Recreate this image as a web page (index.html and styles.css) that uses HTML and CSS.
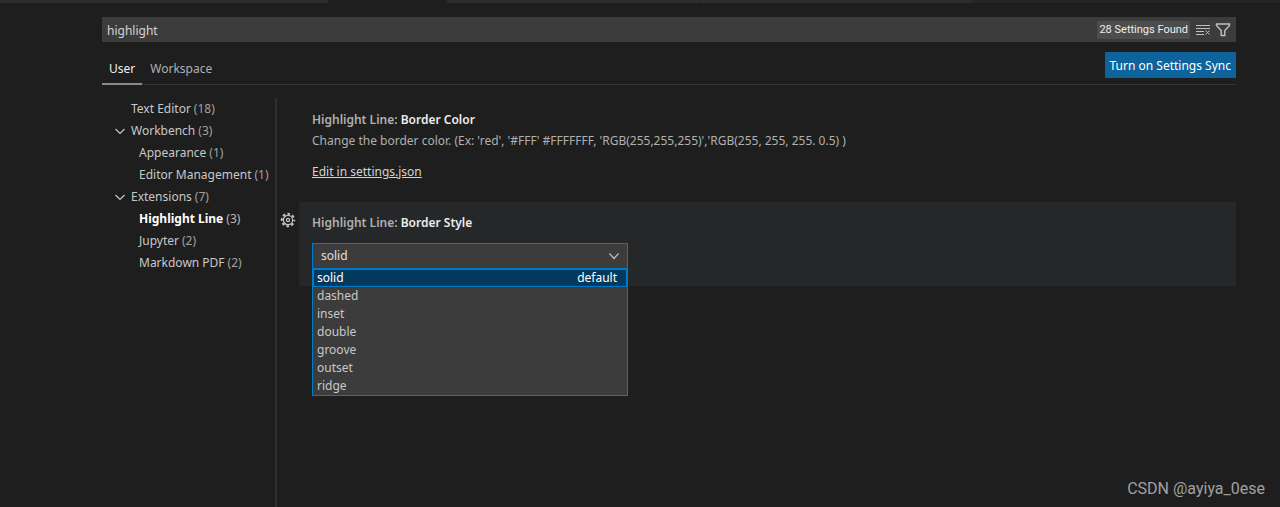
FILE: index.html
```html
<!DOCTYPE html>
<html lang="en">
<head>
<meta charset="utf-8">
<title>Settings</title>
<link rel="stylesheet" href="styles.css">
</head>
<body>
<div class="tabstrip">
  <span class="file w24"></span><span class="file w187"></span><span class="file w118"></span><span class="file active w118"></span><span class="file w124"></span><span class="file w130"></span><span class="file w154"></span><span class="file w118"></span>
</div>
<main class="settings">
  <div class="search">
    <input class="query" type="text" value="highlight" aria-label="Search settings">
    <span class="count-badge">28 Settings Found</span>
    <button class="icon-btn" aria-label="Clear search"><svg width="16" height="16" viewBox="0 0 16 16" fill="none" stroke="currentColor"><path d="M1 3.500h14M1 6.500h14M1 9.500h8M1 12.500h8M10.500 8.500l4 4M14.500 8.500l-4 4"/></svg></button>
    <button class="icon-btn" aria-label="Filter settings"><svg width="16" height="16" viewBox="0 0 16 16" fill="none" stroke="currentColor" stroke-width="1.400"><path d="M1.500 2h13v1.500L9.800 8.500v5H6.200v-5L1.500 3.500z"/></svg></button>
  </div>
  <div class="scope">
    <nav class="scope-tabs">
      <button class="scope-tab selected">User</button>
      <button class="scope-tab">Workspace</button>
    </nav>
    <button class="sync">Turn on Settings Sync</button>
  </div>
  <div class="body">
    <nav class="toc">
      <a class="row" href="#">Text Editor <span class="num">(18)</span></a>
      <a class="row" href="#"><svg class="chev" width="16" height="16" viewBox="0 0 16 16"><path d="M3.500 6L8 10.500 12.500 6"/></svg>Workbench <span class="num">(3)</span></a>
      <a class="row child" href="#">Appearance <span class="num">(1)</span></a>
      <a class="row child" href="#">Editor Management <span class="num">(1)</span></a>
      <a class="row" href="#"><svg class="chev" width="16" height="16" viewBox="0 0 16 16"><path d="M3.500 6L8 10.500 12.500 6"/></svg>Extensions <span class="num">(7)</span></a>
      <a class="row child current" href="#"><b>Highlight Line</b> <span class="num">(3)</span></a>
      <a class="row child" href="#">Jupyter <span class="num">(2)</span></a>
      <a class="row child" href="#">Markdown PDF <span class="num">(2)</span></a>
    </nav>
    <div class="list">
      <section class="item">
        <h2 class="title"><span class="cat">Highlight Line:</span> Border Color</h2>
        <p class="desc">Change the border color. (Ex: 'red', '#FFF' #FFFFFFF, 'RGB(255,255,255)','RGB(255, 255, 255. 0.5) )</p>
        <a class="edit" href="#">Edit in settings.json</a>
      </section>
      <section class="item focused">
        <button class="gear" aria-label="More actions"><svg width="16" height="16" viewBox="0 0 16 16" fill="none" stroke="currentColor" stroke-linejoin="round"><circle cx="8" cy="8" r="4.600" stroke-width="1.200"/><circle cx="8" cy="8" r="6.200" stroke-width="2" stroke-dasharray="2.600 2.269" stroke-dashoffset="1.300"/><circle cx="8" cy="8" r="1.600" stroke-width="1.200"/></svg></button>
        <h2 class="title"><label for="style"><span class="cat">Highlight Line:</span> Border Style</label></h2>
        <div class="dropdown">
          <select class="select" id="style"><option>solid</option><option>dashed</option><option>inset</option><option>double</option><option>groove</option><option>outset</option><option>ridge</option></select>
          <svg class="arrow" width="16" height="16" viewBox="0 0 16 16"><path d="M3.500 5.500L8 10.500 12.500 5.500"/></svg>
          <ul class="options" role="listbox" aria-label="Border Style">
            <li class="option picked" role="option" aria-selected="true"><span>solid</span><span>default</span></li>
            <li class="option" role="option">dashed</li>
            <li class="option" role="option">inset</li>
            <li class="option" role="option">double</li>
            <li class="option" role="option">groove</li>
            <li class="option" role="option">outset</li>
            <li class="option" role="option">ridge</li>
          </ul>
        </div>
      </section>
    </div>
  </div>
</main>
<div class="watermark">CSDN @ayiya_0ese</div>
</body>
</html>
```
FILE: styles.css
```css
* { box-sizing: border-box; }
body {
  margin: 0;
  min-height: 100vh;
  display: flex;
  flex-direction: column;
  background: #1e1e1e;
  color: #c8c8c8;
  font: 12px/18px "Noto Sans", "Open Sans", sans-serif;
}
button, input, select { font: inherit; color: inherit; border: 0; margin: 0; padding: 0; background: none; }
a { color: inherit; text-decoration: none; }

.tabstrip { display: flex; height: 3px; background: #252526; }
.file { background: #2d2d2d; border-right: 1px solid #252526; }
.file.active { background: #1e1e1e; }
.w24 { width: 24px; }
.w118 { width: 118px; }
.w124 { width: 124px; }
.w130 { width: 130px; }
.w154 { width: 154px; }
.w187 { width: 187px; }

.settings { flex: 1; display: flex; flex-direction: column; padding: 14px 44px 0 102px; }
.search { display: flex; align-items: center; gap: 4px; height: 25px; padding: 0 5px; background: #3c3c3c; }
.query { flex: 1; min-width: 0; height: 24px; padding-top: 1px; color: #d4d4d4; }
.count-badge { margin-right: 1px; padding: 0 2px; background: #4d4d4d; color: #eeeeee; font-size: 11px; font-family: Roboto, sans-serif; border-radius: 2px; white-space: nowrap; }
.icon-btn { display: flex; color: #c0c0c0; }

.scope { display: flex; justify-content: space-between; align-items: flex-start; height: 43px; padding-top: 10px; border-bottom: 1px solid #343435; }
.scope-tabs { display: flex; align-self: stretch; margin-bottom: -1px; }
.scope-tab { padding: 2px 8px 0; height: 33px; border-bottom: 2px solid transparent; color: #b0b0b0; }
.scope-tab.selected { color: #f0f0f0; padding: 2px 7px 0; border-color: #8a8a8a; }
.sync { height: 26px; padding: 1px 5px 0; background: #0e639c; color: #ffffff; }

.body { flex: 1; display: flex; padding-top: 13px; }
.toc { width: 175px; flex: none; border-right: 2px solid #2f2f30; }
.row { display: flex; align-items: center; gap: 3px; height: 22px; padding-left: 29px; white-space: nowrap; }
.row.child { padding-left: 37px; }
.chev { margin: 0 0 0 -19px; }
.chev path, .arrow path { fill: none; stroke: #c5c5c5; stroke-width: 1.2; }
.num { color: #a2a2a2; }
.current { color: #ffffff; }
.current .num { color: #b8b8b8; }

.list { flex: 1; min-width: 0; padding-left: 22px; }
.item { position: relative; padding: 13px 13px 21px; }
.title { margin: 0; font-size: 12px; font-weight: 600; line-height: 18px; color: #ececec; }
.cat { color: #b0b0b0; }
.desc { margin: 3px 0 13px; color: #b0b0b0; }
.edit { color: #d4d4d4; text-decoration: underline; }
.focused { background: #252729; padding: 12px 13px 17px; }
.gear { position: absolute; left: -19px; top: 10px; display: flex; color: #c5c5c5; }
.dropdown { position: relative; width: 316px; max-width: 100%; margin-top: 11px; }
.select { display: block; appearance: none; width: 100%; height: 26px; padding: 0 8px; background: #3c3c3c; border: 1px solid #007acc; color: #e0e0e0; }
.arrow { position: absolute; right: 6px; top: 5px; pointer-events: none; }
.options { position: absolute; z-index: 1; top: 25px; left: 0; right: 0; margin: 0; padding: 0; list-style: none; background: #3c3c3c; border: 1px solid #007acc; }
.option { display: flex; justify-content: space-between; height: 18px; padding: 0 4px; color: #c8c8c8; line-height: 18px; }
.picked { padding: 0 9px 0 3px; background: #04395e; color: #ffffff; border: 1px solid #007acc; line-height: 16px; }

.watermark { position: absolute; right: 15px; bottom: 8px; color: #a0a0a0; font: 16px/20px Roboto, sans-serif; }
```
